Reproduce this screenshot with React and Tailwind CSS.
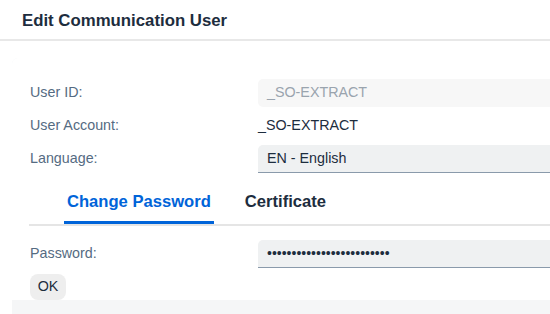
import React, { useState } from 'react';

// Form rows for the communication user dialog
const rows = [
  { label: 'User ID:', value: '_SO-EXTRACT', kind: 'disabled' },
  { label: 'User Account:', value: '_SO-EXTRACT', kind: 'text' },
  { label: 'Language:', value: 'EN - English', kind: 'input' },
];

const Field = ({ kind, value }) => {
  if (kind === 'text') {
    return <div className="text-[14.3px] text-[#1d2d3e]">{value}</div>;
  }
  if (kind === 'disabled') {
    return (
      <div className="h-[28px] w-[320px] rounded-l-[5px] bg-[#f7f7f7] pl-[9px] flex items-center text-[14.3px] text-[#9aa4ae]">
        {value}
      </div>
    );
  }
  return (
    <div className="h-[28px] w-[320px] rounded-tl-[5px] bg-[#eff1f2] border-b border-[#8a9aab] pl-[9px] flex items-center text-[14.3px] text-[#1d2d3e]">
      {value}
    </div>
  );
};

const App = () => {
  const [tab, setTab] = useState('password');

  return (
    <div className="w-[550px] h-[314px] overflow-hidden bg-white font-['Liberation_Sans',Arial,sans-serif]">
      <div className="h-[41px] px-[22px] pt-[3px] flex items-center border-b-2 border-[#e8e8e8]">
        <span className="text-[16.8px] font-bold text-[#1d2d3e]">Edit Communication User</span>
      </div>

      <div className="pl-[12px] pt-[17px]">
        <div className="w-[600px] h-[260px] rounded-tl-[6px] bg-[#f5f6f7]">
          <div className="h-[242px] rounded-tl-[6px] bg-white pl-[18px] pt-[21px]">
            <div className="flex flex-col gap-[5px]">
              {rows.map((row) => (
                <div key={row.label} className="flex items-center h-[28px]">
                  <div className="w-[228px] text-[14.3px] text-[#556b82]">{row.label}</div>
                  <Field kind={row.kind} value={row.value} />
                </div>
              ))}
            </div>

            <div className="mt-[1px] -ml-[1px] flex pl-[35px] gap-[28px] border-b-2 border-[#e5e5e5]">
              <button
                onClick={() => setTab('password')}
                className={`h-[50px] pt-[8px] px-[3px] leading-[20px] text-[16.6px] font-bold border-b-[3px] ${
                  tab === 'password' ? 'text-[#0064d9] border-[#0064d9]' : 'text-[#1d2d3e] border-transparent'
                }`}
              >
                Change Password
              </button>
              <button
                onClick={() => setTab('certificate')}
                className={`h-[50px] pt-[8px] px-[3px] leading-[20px] text-[16.6px] font-bold border-b-[3px] ${
                  tab === 'certificate' ? 'text-[#0064d9] border-[#0064d9]' : 'text-[#1d2d3e] border-transparent'
                }`}
              >
                Certificate
              </button>
            </div>

            <div className="mt-[14px] flex items-center h-[28px]">
              <div className="w-[228px] text-[14.3px] text-[#556b82]">Password:</div>
              <div className="h-[28px] w-[320px] rounded-tl-[5px] bg-[#eff1f2] border-b border-[#8a9aab] pl-[9px] flex items-center text-[14px] text-[#1d2d3e]">
                •••••••••••••••••••••••••
              </div>
            </div>

            <button className="mt-[6px] h-[26px] w-[36px] rounded-[8px] bg-[#eeeeee] text-[14.3px] text-[#1d2d3e] flex items-center justify-center">
              OK
            </button>
          </div>
        </div>
      </div>
    </div>
  );
};

export default App;
